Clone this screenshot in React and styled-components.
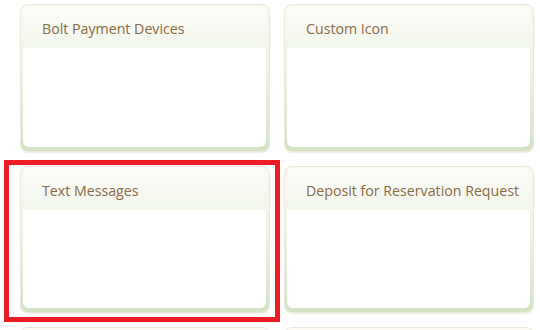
import React from 'react';
import styled, { createGlobalStyle } from 'styled-components';

const GlobalStyle = createGlobalStyle`
  html, body {
    margin: 0;
    padding: 0;
    background: #ffffff;
  }
  body {
    font-family: 'Open Sans', 'Noto Sans', sans-serif;
  }
`;

const StyledGrid = styled.div`
  display: grid;
  grid-template-columns: repeat(2, 250px);
  grid-template-rows: 148px 147px 147px;
  column-gap: 14px;
  row-gap: 14px;
  padding: 4px 0 0 20px;
  width: 540px;
  height: 330px;
  box-sizing: border-box;
  overflow: hidden;
`;

const StyledSlot = styled.div`
  position: relative;
`;

const StyledHighlight = styled.div`
  position: absolute;
  left: -16px;
  right: -10px;
  top: -6px;
  bottom: -9px;
  border: 5px solid #ec1c24;
  pointer-events: none;
`;

const StyledCard = styled.div`
  height: 100%;
  box-sizing: border-box;
  border: 1px solid #ede7dc;
  border-radius: 8px;
  padding: 2px 3px 4px 2px;
  background: linear-gradient(to bottom, #fbf9f2 0%, #eef1e4 50%, #d2e3c2 100%);
  box-shadow: 0 1px 1px rgba(220, 210, 190, 0.4);
`;

const StyledPanel = styled.div`
  height: 100%;
  background: #ffffff;
  border-radius: 6px;
  overflow: hidden;
`;

const StyledHeader = styled.div`
  height: 41px;
  box-sizing: border-box;
  padding: 2px 0 0 19px;
  display: flex;
  align-items: center;
  background: linear-gradient(to bottom, #fcfcf8 0%, #f1f6eb 100%);
  color: #8a6a45;
  font-size: 14.2px;
  white-space: nowrap;
`;

const cards = [
  { title: 'Bolt Payment Devices' },
  { title: 'Custom Icon' },
  { title: 'Text Messages', highlighted: true },
  { title: 'Deposit for Reservation Request' },
  { title: '' },
  { title: '' },
];

const App = () => (
  <>
    <GlobalStyle />
    <StyledGrid>
      {cards.map((card, i) => (
        <StyledSlot key={i}>
          <StyledCard>
            <StyledPanel>
              <StyledHeader>{card.title}</StyledHeader>
            </StyledPanel>
          </StyledCard>
          {card.highlighted && <StyledHighlight />}
        </StyledSlot>
      ))}
    </StyledGrid>
  </>
);

export default App;
